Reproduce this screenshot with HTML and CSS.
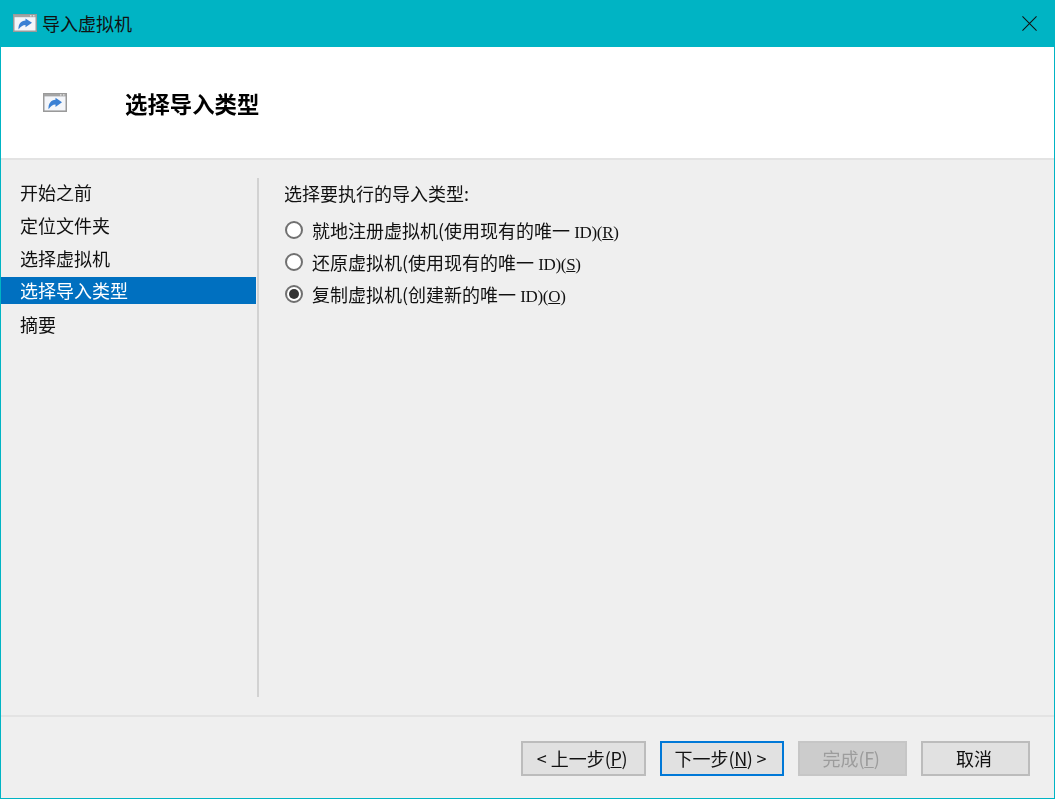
FILE: index.html
```html
<!DOCTYPE html>
<html lang="zh-CN">
<head>
<meta charset="utf-8">
<title>导入虚拟机</title>
<link rel="stylesheet" href="styles.css">
</head>
<body>
<svg class="defs" width="0" height="0" aria-hidden="true">
  <symbol id="import-icon" viewBox="0 0 24 18" preserveAspectRatio="none">
    <rect x="0.75" y="0.75" width="22.5" height="16.5" fill="#f4f6fa" stroke="#9a9a9a" stroke-width="1.5"/>
    <rect x="1" y="1" width="22" height="2.2" fill="#a4a4a4"/>
    <rect x="17" y="1.2" width="1.5" height="1.2" fill="#e8e8e8"/>
    <rect x="20" y="1.2" width="1.5" height="1.2" fill="#e8e8e8"/>
    <path d="M5.500 15.500C5.200 10 8 6.700 12.500 6.500V4.500l6.500 4.300-6.500 4.500v-2.300c-2.800 0-4.800 1.500-7 4.500z" fill="#3a80d4"/>
  </symbol>
</svg>
<div class="window">
  <header class="titlebar">
    <svg class="title-icon"><use href="#import-icon"/></svg>
    <span class="title-text">导入虚拟机</span>
    <svg class="close" viewBox="0 0 16 16" aria-label="关闭"><path d="M.5.5l15 15M15.5.5l-15 15" stroke="#111" stroke-width="1.1" fill="none"/></svg>
  </header>
  <section class="banner">
    <svg class="banner-icon"><use href="#import-icon"/></svg>
    <h1 class="banner-title">选择导入类型</h1>
  </section>
  <main class="content">
    <nav class="steps">
      <div class="step">开始之前</div>
      <div class="step">定位文件夹</div>
      <div class="step">选择虚拟机</div>
      <div class="step active">选择导入类型</div>
      <div class="step">摘要</div>
    </nav>
    <section class="pane">
      <p class="prompt">选择要执行的导入类型:</p>
      <label class="option"><span class="radio"></span><span>就地注册虚拟机(使用现有的唯一 <span class="latin">ID)(<u>R</u>)</span></span></label>
      <label class="option"><span class="radio"></span><span>还原虚拟机(使用现有的唯一 <span class="latin">ID)(<u>S</u>)</span></span></label>
      <label class="option"><span class="radio checked"></span><span>复制虚拟机(创建新的唯一 <span class="latin">ID)(<u>O</u>)</span></span></label>
    </section>
  </main>
  <footer class="footer">
    <div class="btn">&lt; 上一步<span class="key">(<u>P</u>)</span></div>
    <div class="btn primary">下一步<span class="key">(<u>N</u>)</span> &gt;</div>
    <div class="btn disabled">完成<span class="key">(<u>F</u>)</span></div>
    <div class="btn cancel">取消</div>
  </footer>
</div>
</body>
</html>
```
FILE: styles.css
```css
* { box-sizing: border-box; }
html, body { margin: 0; height: 100%; }
body {
  font-family: "Noto Sans CJK SC", "Noto Sans", sans-serif;
  font-size: 18px;
  color: #111;
  background: #efefef;
  overflow: hidden;
}
.defs { position: absolute; }
.window {
  width: 1055px;
  height: 799px;
  display: flex;
  flex-direction: column;
  border-left: 1px solid #00b4c4;
  border-right: 1px solid #00b4c4;
  border-bottom: 1px solid #00b4c4;
  filter: blur(0.3px);
}
.titlebar {
  height: 47px;
  margin: 0 -1px;
  padding: 0 14px 0 13px;
  background: #00b4c4;
  display: flex;
  align-items: center;
  flex: none;
}
.title-icon { width: 24px; height: 18px; margin-right: 5px; margin-top: -1px; }
.title-text { line-height: 47px; flex: 1; }
.close { width: 15px; height: 15px; margin-right: 4px; }
.banner {
  height: 113px;
  flex: none;
  background: #fff;
  border-bottom: 2px solid #e3e3e3;
  display: flex;
  align-items: center;
  padding: 0 0 0 42px;
}
.banner-icon { width: 24px; height: 19px; margin-right: 58px; }
.banner-title { margin: 0; font-size: 22.4px; font-weight: 700; line-height: 30px; color: #000; }
.content {
  flex: 1;
  display: flex;
  padding-top: 18px;
  min-height: 0;
  border-bottom: 2px solid #e3e3e3;
  padding-bottom: 18px;
}
.steps {
  width: 258px;
  flex: none;
  border-right: 2px solid #d2d2d2;
  padding-right: 1px;
}
.step {
  height: 33px;
  line-height: 29px;
  padding-left: 19px;
}
.step.active {
  height: 27px;
  margin-bottom: 6px;
  line-height: 26px;
  background: #0070c0;
  color: #fff;
}
.pane { padding: 0 0 0 25px; flex: 1; }
.prompt { margin: 0 0 6px; height: 30px; display: flex; align-items: center; }
.option { display: flex; align-items: center; height: 32px; gap: 9px; }
.latin { font-family: "Liberation Serif", serif; font-size: 17px; letter-spacing: -0.3px; }
.key { letter-spacing: -0.4px; }
.radio {
  width: 18px;
  height: 18px;
  margin-left: 1px;
  border: 2px solid #707070;
  border-radius: 50%;
  background: #fff;
  flex: none;
  display: flex;
  align-items: center;
  justify-content: center;
}
.radio.checked::after {
  content: "";
  width: 10px;
  height: 10px;
  border-radius: 50%;
  background: #333;
}
.footer {
  flex: none;
  height: 81px;
  display: flex;
  align-items: flex-start;
  padding: 24px 24px 0 520px;
}
.btn {
  height: 35px;
  line-height: 31px;
  padding-right: 3px;
  text-align: center;
  background: #e1e1e1;
  border: 2px solid #bcbcbc;
  width: 125px;
  white-space: nowrap;
}
.primary { width: 124px; margin-left: 14px; border-color: #0078d7; }
.disabled { width: 109px; margin-left: 14px; background: #cccccc; border-color: #c6c6c6; color: #9c9c9c; }
.cancel { width: 109px; margin-left: 14px; }
```
